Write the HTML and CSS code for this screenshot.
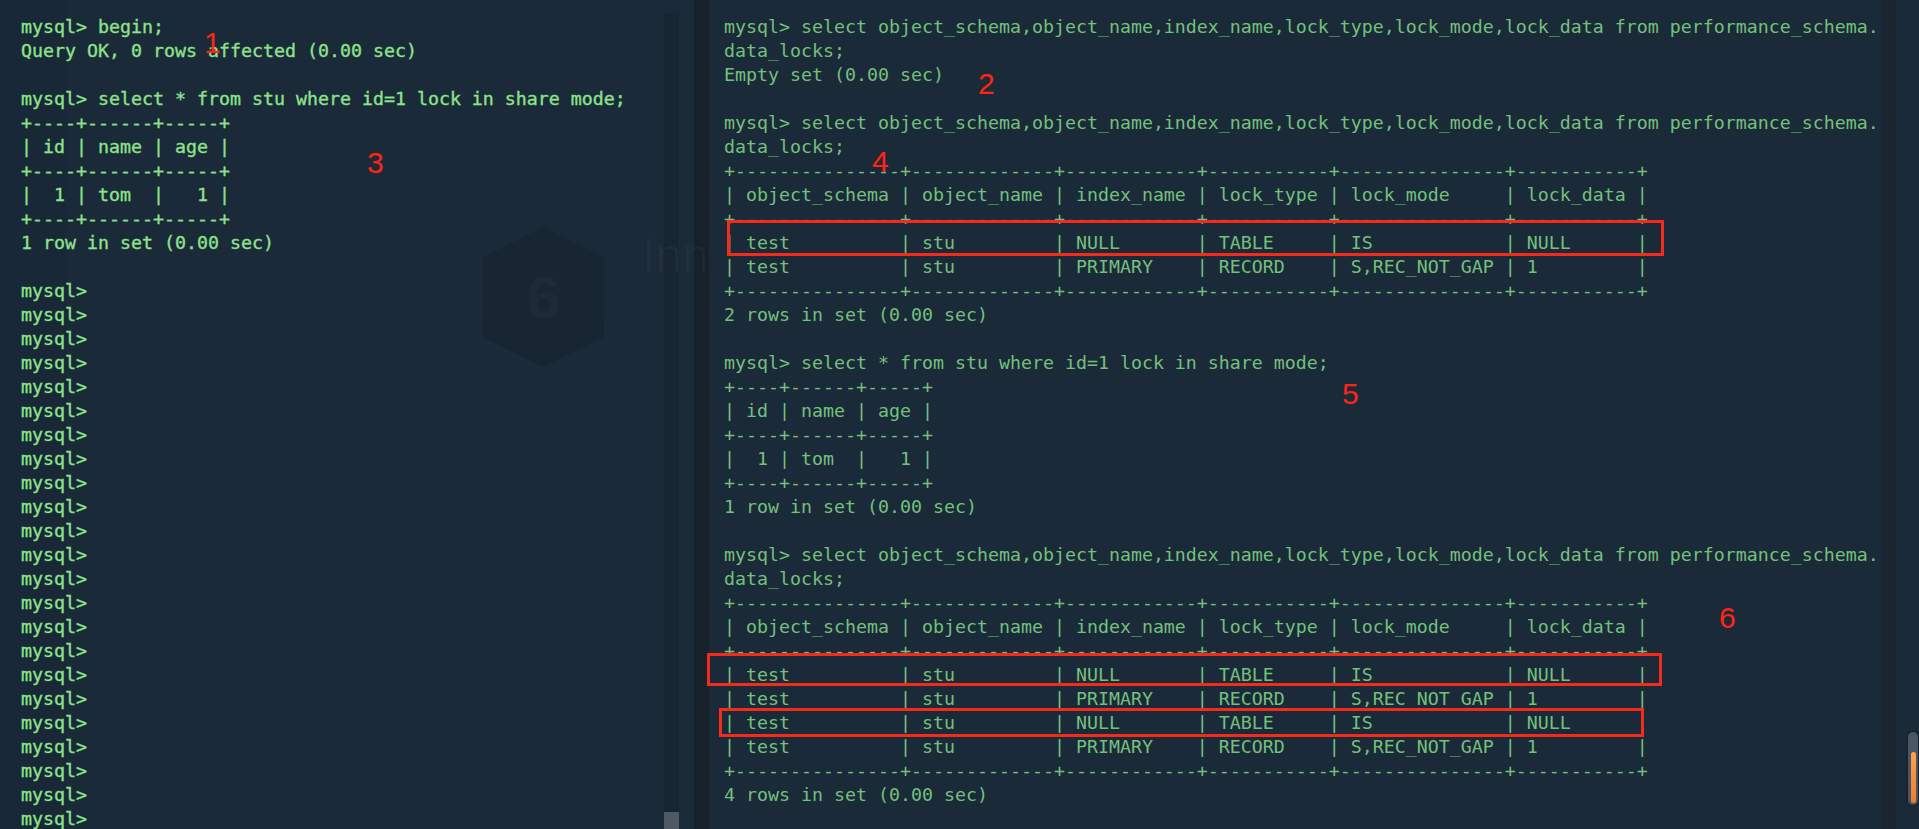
FILE: index.html
```html
<!DOCTYPE html>
<html lang="en">
<head>
<meta charset="utf-8">
<title>mysql data_locks</title>
<link rel="stylesheet" href="styles.css">
</head>
<body>
<div class="screen">
  <section class="pane-left">
<pre class="term term-left">mysql&gt; begin;
Query OK, 0 rows affected (0.00 sec)

mysql&gt; select * from stu where id=1 lock in share mode;
+----+------+-----+
| id | name | age |
+----+------+-----+
|  1 | tom  |   1 |
+----+------+-----+
1 row in set (0.00 sec)

mysql&gt;
mysql&gt;
mysql&gt;
mysql&gt;
mysql&gt;
mysql&gt;
mysql&gt;
mysql&gt;
mysql&gt;
mysql&gt;
mysql&gt;
mysql&gt;
mysql&gt;
mysql&gt;
mysql&gt;
mysql&gt;
mysql&gt;
mysql&gt;
mysql&gt;
mysql&gt;
mysql&gt;
mysql&gt;
mysql&gt;</pre>
  </section>
  <div class="left-track"><div class="left-thumb"></div></div>
  <div class="gutter"></div>
  <div class="sep"></div>
  <section class="pane-right">
<pre class="term term-right">mysql&gt; select object_schema,object_name,index_name,lock_type,lock_mode,lock_data from performance_schema.
data_locks;
Empty set (0.00 sec)

mysql&gt; select object_schema,object_name,index_name,lock_type,lock_mode,lock_data from performance_schema.
data_locks;
+---------------+-------------+------------+-----------+---------------+-----------+
| object_schema | object_name | index_name | lock_type | lock_mode     | lock_data |
+---------------+-------------+------------+-----------+---------------+-----------+
| test          | stu         | NULL       | TABLE     | IS            | NULL      |
| test          | stu         | PRIMARY    | RECORD    | S,REC_NOT_GAP | 1         |
+---------------+-------------+------------+-----------+---------------+-----------+
2 rows in set (0.00 sec)

mysql&gt; select * from stu where id=1 lock in share mode;
+----+------+-----+
| id | name | age |
+----+------+-----+
|  1 | tom  |   1 |
+----+------+-----+
1 row in set (0.00 sec)

mysql&gt; select object_schema,object_name,index_name,lock_type,lock_mode,lock_data from performance_schema.
data_locks;
+---------------+-------------+------------+-----------+---------------+-----------+
| object_schema | object_name | index_name | lock_type | lock_mode     | lock_data |
+---------------+-------------+------------+-----------+---------------+-----------+
| test          | stu         | NULL       | TABLE     | IS            | NULL      |
| test          | stu         | PRIMARY    | RECORD    | S,REC_NOT_GAP | 1         |
| test          | stu         | NULL       | TABLE     | IS            | NULL      |
| test          | stu         | PRIMARY    | RECORD    | S,REC_NOT_GAP | 1         |
+---------------+-------------+------------+-----------+---------------+-----------+
4 rows in set (0.00 sec)</pre>
  </section>
  <div class="edge-strip"></div>
  <div class="edge">
    <div class="vthumb"><div class="vthumb-fill"></div></div>
  </div>
</div>

<!-- faint window showing through the translucent terminal -->
<div class="wm">
  <svg class="wm-hex" width="121" height="140" viewBox="0 0 121 140"><polygon points="60,0 121,30 121,110 60,140 0,110 0,30" fill="#000" fill-opacity="0.09"/><polygon points="0,110 60,140 121,110 121,95 60,125 0,95" fill="#000" fill-opacity="0.04"/></svg>
  <span class="wm-six">6</span>
  <span class="wm-title">Inno</span>
</div>

<div class="mark box-a"></div>
<div class="mark box-b"></div>
<div class="mark box-c"></div>

<span class="num n1">1</span>
<span class="num n2">2</span>
<span class="num n3">3</span>
<span class="num n4">4</span>
<span class="num n5">5</span>
<span class="num n6">6</span>
</body>
</html>
```

FILE: styles.css
```css
html, body {
  margin: 0;
  padding: 0;
}

body {
  width: 1919px;
  height: 829px;
  overflow: hidden;
  background: #1b2a39;
  position: relative;
}

.screen {
  display: flex;
  height: 829px;
}

.pane-left {
  width: 664px;
  flex: none;
  overflow: hidden;
  background: linear-gradient(90deg, #192836 0, #192836 67px, #1b2a39 67px);
}

.term {
  margin: 0;
  font-family: "DejaVu Sans Mono", "Liberation Mono", monospace;
  font-size: 18.27px;
  line-height: 24px;
  white-space: pre;
  font-variant-ligatures: none;
}

.term-left {
  padding: 15px 0 0 21px;
  color: #8de28b;
  -webkit-text-stroke: 0.35px #8de28b;
}

.term-right {
  padding: 15px 0 0 15px;
  color: #73c07c;
}

/* background watermark of the window behind the terminal */
.wm {
  position: absolute;
  left: 0;
  top: 0;
  width: 709px;
  height: 829px;
  overflow: hidden;
  pointer-events: none;
}

.wm-hex {
  position: absolute;
  left: 483px;
  top: 227px;
}

.wm-six {
  position: absolute;
  left: 527px;
  top: 268px;
  font-family: "Liberation Sans", Arial, sans-serif;
  font-weight: bold;
  font-size: 60px;
  line-height: 60px;
  color: rgba(255, 255, 255, 0.025);
}

.wm-title {
  position: absolute;
  left: 642px;
  top: 232px;
  font-family: "Liberation Sans", Arial, sans-serif;
  font-size: 48px;
  line-height: 48px;
  color: rgba(255, 255, 255, 0.028);
}

.left-track {
  width: 15px;
  flex: none;
  margin-top: 13px;
  background: #182633;
  display: flex;
  flex-direction: column;
  justify-content: flex-end;
}

.left-thumb {
  height: 17px;
  background: #4f5966;
}

.gutter {
  width: 15px;
  flex: none;
  background: #1c2b39;
}

.sep {
  width: 15px;
  flex: none;
  background: #16212c;
}

.pane-right {
  width: 1173px;
  flex: none;
  overflow: hidden;
  background: #1b2a39;
}

.edge-strip {
  width: 14px;
  flex: none;
  background: #19252f;
}

.edge {
  width: 23px;
  flex: none;
  box-sizing: border-box;
  padding: 732px 0 0 12px;
  background: #1b2a38;
}

.vthumb {
  width: 10px;
  height: 73px;
  box-sizing: border-box;
  padding: 20px 2px 2px 3px;
  border-radius: 5px;
  background: #4b5663;
  box-shadow: 0 0 3px rgba(0, 0, 0, 0.5);
}

.vthumb-fill {
  height: 100%;
  border-radius: 3px;
  background: linear-gradient(180deg, #ffa24a, #f07c2e);
}

/* red annotation boxes drawn over the screenshot */
.mark {
  position: absolute;
  box-sizing: border-box;
  border: 3px solid #f42a1a;
}

.box-a {
  left: 727px;
  top: 220px;
  width: 937px;
  height: 36px;
}

.box-b {
  left: 707px;
  top: 653px;
  width: 955px;
  height: 33px;
}

.box-c {
  left: 719px;
  top: 708px;
  width: 925px;
  height: 29px;
}

/* red step numbers */
.num {
  position: absolute;
  font-family: "Liberation Sans", Arial, sans-serif;
  font-size: 30px;
  line-height: 30px;
  color: #ff2414;
}

.n1 { left: 204px; top: 28px; }
.n2 { left: 978px; top: 69px; }
.n3 { left: 367px; top: 148px; }
.n4 { left: 872px; top: 147px; }
.n5 { left: 1342px; top: 379px; }
.n6 { left: 1719px; top: 603px; }
```
